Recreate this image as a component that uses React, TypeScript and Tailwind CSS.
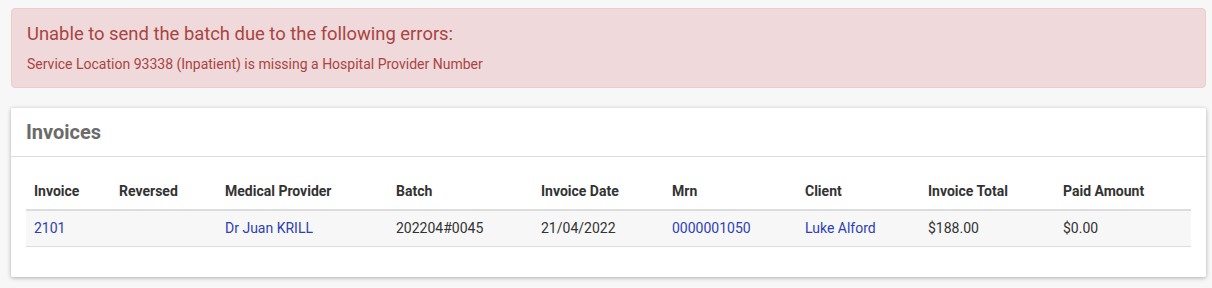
import React from 'react';

const cols = [
  { label: 'Invoice', w: 'w-[85px]' },
  { label: 'Reversed', w: 'w-[106px]' },
  { label: 'Medical Provider', w: 'w-[171px]' },
  { label: 'Batch', w: 'w-[145px]' },
  { label: 'Invoice Date', w: 'w-[131px]' },
  { label: 'Mrn', w: 'w-[133px]' },
  { label: 'Client', w: 'w-[123px]' },
  { label: 'Invoice Total', w: 'w-[135px]' },
  { label: 'Paid Amount', w: 'w-[136px]' },
];

const row: { text: string; link?: boolean }[] = [
  { text: '2101', link: true },
  { text: '' },
  { text: 'Dr Juan KRILL', link: true },
  { text: '202204#0045' },
  { text: '21/04/2022' },
  { text: '0000001050', link: true },
  { text: 'Luke Alford', link: true },
  { text: '$188.00' },
  { text: '$0.00' },
];

export default function App() {
  return (
    <div className="min-h-[288px] bg-[#f7f7f7] pt-2 pl-[11px] pr-[6px] font-['Roboto',sans-serif]">
      <div className="rounded border border-[#ebcccf] bg-[#f0d9da] px-[15px] pt-[12px] pb-[13px] text-[#a94442]">
        <h4 className="text-[18.4px] leading-[26px]">Unable to send the batch due to the following errors:</h4>
        <p className="mt-[8px] text-[14px] leading-[19px]">
          Service Location 93338 (Inpatient) is missing a Hospital Provider Number
        </p>
      </div>

      <div className="mt-[20px] rounded-[2px] bg-white shadow-[0_1px_4px_rgba(0,0,0,0.3)]">
        <div className="border-b border-[#dddddd] px-[15px] pt-[11px] pb-[10px]">
          <h3 className="text-[20px] leading-[27px] font-bold text-[#6b6b6b]">Invoices</h3>
        </div>
        <div className="px-[15px] pt-[16px] pb-[30px]">
          <table className="w-full table-fixed border-collapse text-[14px] text-[#333]">
            <thead>
              <tr className="border-b-2 border-[#dddddd]">
                {cols.map((c) => (
                  <th key={c.label} className={`${c.w} px-2 py-2 text-left font-bold leading-[20px]`}>
                    {c.label}
                  </th>
                ))}
              </tr>
            </thead>
            <tbody>
              <tr className="border-b border-[#dddddd] bg-[#f7f7f7]">
                {row.map((c, i) => (
                  <td key={i} className={`px-2 py-2 leading-[19px] ${c.link ? 'text-[#2d3fb4]' : ''}`}>
                    {c.text}
                  </td>
                ))}
              </tr>
            </tbody>
          </table>
        </div>
      </div>
    </div>
  );
}
